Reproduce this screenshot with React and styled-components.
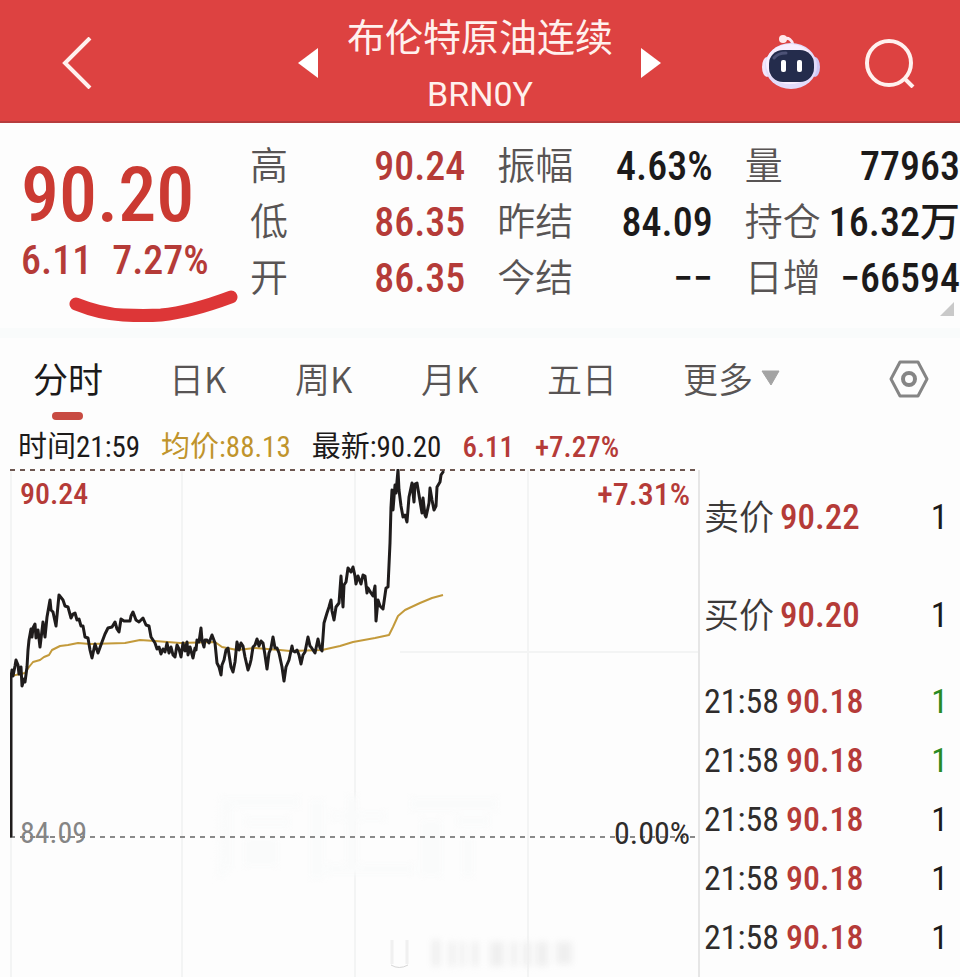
import React, { useState } from 'react';
import styled, { createGlobalStyle } from 'styled-components';

const GlobalStyle = createGlobalStyle`
  *, *::before, *::after {
    box-sizing: border-box;
  }

  body {
    margin: 0;
    background: #fdfdfd;
    color: #1c1a1a;
    font-family: 'Roboto Condensed', Roboto, 'Noto Sans CJK SC', sans-serif;
    overflow-x: hidden;
  }

  button {
    padding: 0;
    border: none;
    background: none;
    color: inherit;
    font: inherit;
    cursor: pointer;
  }
`;

const Page = styled.div`
  min-height: 100vh;
  overflow: hidden;
`;

const Header = styled.header`
  display: grid;
  grid-template-columns: 1fr auto 1fr;
  align-items: center;
  height: 123px;
  padding-top: 4px;
  background: #dd4241;
  border-bottom: 2px solid #b63c3d;
  color: #fff1ee;
`;

const HeaderSide = styled.div`
  display: flex;
  align-items: center;
  justify-content: ${({ $end }) => ($end ? 'flex-end' : 'flex-start')};
  gap: 44px;
  padding: 0 45px 0 62px;
`;

const IconButton = styled.button`
  display: flex;
  flex: none;

  svg {
    display: block;
  }
`;

const Switcher = styled.div`
  display: flex;
  align-items: center;
  gap: 28px;
`;

const Title = styled.h1`
  margin: 0;
  padding-top: 6px;
  font-size: 38px;
  font-weight: 400;
  line-height: 56px;
  text-align: center;
`;

const Code = styled.span`
  display: block;
  font-family: Roboto, sans-serif;
  font-size: 34px;
`;

const Quote = styled.section`
  position: relative;
  display: grid;
  grid-template-columns: 250px 1fr;
  height: 205px;
  padding-top: 16px;
`;

const Latest = styled.div`
  padding: 16px 0 0 21px;
  color: #cb3a32;
`;

const BigPrice = styled.div`
  font-size: 76px;
  font-weight: 500;
  line-height: 80px;
`;

const Change = styled.div`
  display: flex;
  gap: 20px;
  color: #b53b38;
  font-size: 40px;
  font-weight: 500;
  line-height: 52px;
`;

const Swoosh = styled.svg`
  display: block;
  margin: 3px 0 0 48px;
`;

const Stats = styled.dl`
  display: grid;
  grid-template-columns: repeat(3, 1fr);
  grid-auto-rows: 56px;
  column-gap: 32px;
  align-content: start;
  margin: 0;
`;

const Stat = styled.div`
  display: flex;
  align-items: center;
  justify-content: space-between;
  line-height: 48px;
  white-space: nowrap;

  dt {
    padding-bottom: 8px;
    color: #585454;
    font-family: 'Noto Sans CJK SC', sans-serif;
    font-size: 38px;
    font-weight: 350;
  }

  dd {
    margin: 0;
    color: ${({ $up }) => ($up ? '#b53b38' : '#1c1a1a')};
    font-size: 40px;
    font-weight: 500;
  }
`;

const Corner = styled.svg`
  position: absolute;
  right: 6px;
  bottom: 12px;
`;

const Tabs = styled.nav`
  display: flex;
  align-items: flex-start;
  height: 99px;
  padding: 18px 31px 0 33px;
  border-top: 10px solid #f9fbfb;
`;

const Tab = styled.button`
  display: flex;
  flex-direction: column;
  align-items: flex-start;
  width: ${({ $wide }) => ($wide ? '136px' : '126px')};
  color: ${({ $active }) => ($active ? '#1c1a1a' : '#585454')};
  font-family: 'Noto Sans CJK SC', sans-serif;
  font-size: 35px;
  font-weight: ${({ $active }) => ($active ? 400 : 350)};
  line-height: 44px;
  white-space: nowrap;

  &::after {
    content: '';
    width: 31px;
    height: 8px;
    margin: 12px 0 0 19px;
    border-radius: 4px;
    background: ${({ $active }) => ($active ? '#c84b42' : 'transparent')};
  }
`;

const TabLabel = styled.span`
  display: flex;
  align-items: center;
  gap: 8px;
`;

const Settings = styled(IconButton)`
  margin: 4px 0 0 auto;
`;

const Summary = styled.div`
  display: flex;
  gap: 21px;
  height: 42px;
  padding-left: 18px;
  font-size: 29px;
  line-height: 40px;
  white-space: nowrap;
`;

const Tone = styled.span`
  color: ${({ $tone }) => ({ avg: '#c0942c', up: '#b53b38' })[$tone] || 'inherit'};
  font-weight: ${({ $tone }) => ($tone === 'up' ? 500 : 400)};
`;

const Main = styled.main`
  display: grid;
  grid-template-columns: minmax(0, 690fr) minmax(0, 260fr);
  padding-left: 10px;
`;

const ChartBox = styled.div`
  position: relative;
`;

const ChartSvg = styled.svg`
  display: block;
  width: 100%;
  height: 508px;
`;

const Haze = styled.g`
  filter: blur(3px);
`;

const AxisLabel = styled.span`
  position: absolute;
  top: ${({ $base }) => ($base ? '346px' : '7px')};
  ${({ $right }) => ($right ? 'right: 10px;' : 'left: 10px;')}
  color: ${({ $color }) => $color};
  font-size: ${({ $right }) => ($right ? '32px' : '30px')};
  font-weight: ${({ $base }) => ($base ? 400 : 500)};
  line-height: 36px;
`;

const Side = styled.aside`
  padding: 0 12px 0 4px;
  white-space: nowrap;
`;

const Level = styled.div`
  display: flex;
  align-items: center;
  gap: 6px;
  height: 98px;
  font-size: 35px;
  line-height: 48px;
`;

const LevelLabel = styled.span`
  padding-bottom: 6px;
  color: #3c3939;
  font-family: 'Noto Sans CJK SC', sans-serif;
  font-weight: 350;
`;

const Price = styled.span`
  color: #b53b38;
  font-weight: 500;
`;

const Volume = styled.span`
  margin-left: auto;
  color: ${({ $green }) => ($green ? '#2b8a22' : '#1c1a1a')};
`;

const Trades = styled.ol`
  margin: 6px 0 0;
  padding: 0;
  list-style: none;
`;

const Trade = styled.li`
  display: flex;
  align-items: center;
  gap: 7px;
  height: 59px;
  color: #2f2c2c;
  font-size: 34px;
`;

const stats = [
  { label: '高', value: '90.24', up: true },
  { label: '振幅', value: '4.63%' },
  { label: '量', value: '77963' },
  { label: '低', value: '86.35', up: true },
  { label: '昨结', value: '84.09' },
  { label: '持仓', value: '16.32万' },
  { label: '开', value: '86.35', up: true },
  { label: '今结', value: '−−' },
  { label: '日增', value: '−66594' },
];

const tabs = ['分时', '日K', '周K', '月K', '五日', '更多'];

const levels = [
  { label: '卖价', price: '90.22', volume: 1 },
  { label: '买价', price: '90.20', volume: 1 },
];

const trades = [
  { id: 1, time: '21:58', price: '90.18', volume: 1, green: true },
  { id: 2, time: '21:58', price: '90.18', volume: 1, green: true },
  { id: 3, time: '21:58', price: '90.18', volume: 1 },
  { id: 4, time: '21:58', price: '90.18', volume: 1 },
  { id: 5, time: '21:58', price: '90.18', volume: 1 },
];

const priceLine =
  '11,836 11,677 12,670 13,676 15,666 16,660 18,665 19,674 21,667 22,686 24,679 25,682 27,667 28,650 29,640 31,629 32,637 33,628 35,624 36,638 38,630 40,647 43,622 45,637 47,617 50,600 51,610 53,612 56,626 59,595 63,600 65,606 68,607 71,618 73,614 75,613 77,620 79,619 81,626 83,626 85,637 88,638 90,650 92,658 95,644 98,653 102,642 105,634 108,628 112,627 115,622 117,629 119,632 121,619 124,621 130,621 131,616 133,612 136,620 139,622 143,618 146,625 149,626 151,637 155,643 157,649 159,647 161,654 163,649 165,652 167,643 169,653 171,647 173,655 175,657 177,645 179,649 181,657 183,643 185,651 187,642 188,655 190,647 193,658 195,648 196,650 197,640 199,642 201,628 202,640 204,647 205,640 207,640 209,643 212,635 215,643 217,663 219,667 221,675 222,665 224,660 226,650 228,648 231,667 233,672 235,662 237,642 239,650 241,643 243,646 245,657 248,670 250,664 251,660 253,647 255,645 257,639 259,646 261,641 263,643 265,655 267,669 269,653 271,648 273,637 275,648 277,648 279,653 282,667 284,681 286,667 289,660 292,646 293,651 295,652 297,650 299,655 301,664 303,655 305,652 308,637 310,646 311,647 313,650 315,653 318,639 320,648 322,651 324,623 327,613 329,607 331,600 332,611 334,620 336,607 339,603 341,576 343,607 344,585 346,582 348,568 351,572 353,567 355,576 356,584 358,576 361,584 363,575 365,576 367,593 368,588 371,593 373,596 375,586 376,621 378,600 380,606 383,609 386,588 388,587 390,543 391,507 392,490 393,510 395,485 396,493 398,470 399,490 401,506 403,517 405,515 407,522 409,497 412,483 414,502 415,484 417,483 419,495 422,513 423,498 425,515 426,517 429,503 430,488 432,500 434,510 436,506 437,487 440,482 441,475 443,472';

const averageLine =
  '11,676 25,673 29,667 33,662 40,660 44,657 49,655 52,650 60,646 68,645 78,643 90,644 125,643 140,640 155,641 180,643 215,642 222,647 237,650 255,648 280,650 290,651 322,650 340,646 353,642 375,638 389,635 393,627 398,616 405,610 420,603 432,598 443,595';

const RobotIcon = () => (
  <svg width="60" height="58" viewBox="0 0 60 58">
    <path d="M22 5c6-2 9 1 10 6" fill="none" stroke="#fbe9f4" strokeWidth="3" />
    <circle cx="22" cy="5" r="4" fill="#ffe9ec" />
    <ellipse cx="6" cy="33" rx="5" ry="10" fill="#f2e6fa" />
    <ellipse cx="54" cy="33" rx="5" ry="10" fill="#cfc8f5" />
    <ellipse cx="30" cy="32" rx="26" ry="23" fill="#e2dcfa" />
    <ellipse cx="29" cy="30" rx="24" ry="20" fill="#f8efff" />
    <rect x="8" y="16" width="45" height="32" rx="14" fill="#242c4c" />
    <path d="M13 24c3-4 7-5 12-5" fill="none" stroke="#4c5276" strokeWidth="3" strokeLinecap="round" />
    <rect x="20" y="26" width="5" height="12" rx="2" fill="#fff" />
    <rect x="36" y="26" width="5" height="12" rx="2" fill="#fff" />
  </svg>
);

const Chart = () => (
  <ChartSvg viewBox="10 469 690 508" preserveAspectRatio="none" role="img" aria-label="分时走势">
    <g fill="none" stroke="#f3f4f4" strokeWidth="2">
      <path d="M11 470V977M182 470V977M355 470V977M528 470V977" />
      <path d="M400 652H700" />
      <path d="M699 470V977" stroke="#e6e6e6" />
    </g>
    <Haze fill="#fafbfb">
      <path d="M220 797h80v10h-68v60l-14 12zM244 818h46v8h-46zM244 838h34v28h-34zM310 800h14v78h-14zM330 812h56v8h-56zM346 796h12v76h-12zM326 864h88v10h-88zM410 798h88v12h-88zM420 820h22v56h-22zM456 816h34v10h-34zM462 836h12v40h-12z" />
    </Haze>
    <path d="M392 940v24M407 940v24" stroke="#f0f0f0" strokeWidth="3" />
    <path d="M391 965q8 5 17 0" fill="none" stroke="#d6d6d6" />
    <Haze fill="#efefef">
      <path d="M432 940h8v26h-8zM449 942h6v24h-6zM460 942h5v24h-5zM472 942h6v24h-6zM490 942h14v24h-14zM511 942h6v24h-6zM523 942h8v24h-8zM536 942h12v24h-12zM556 942h16v22h-16z" />
    </Haze>
    <path d="M10 470H700" stroke="#6d5751" strokeWidth="2" strokeDasharray="5 5" />
    <path d="M10 837H700" stroke="#8a8a8a" strokeWidth="2" strokeDasharray="5 5" />
    <polyline points={averageLine} fill="none" stroke="#c39a3b" strokeWidth="2" strokeLinejoin="round" />
    <polyline points={priceLine} fill="none" stroke="#1f1c1c" strokeWidth="3" strokeLinejoin="round" strokeLinecap="round" />
  </ChartSvg>
);

const App = () => {
  const [activeTab, setActiveTab] = useState('分时');

  return (
    <Page>
      <GlobalStyle />
      <Header>
        <HeaderSide>
          <IconButton type="button" aria-label="返回">
            <svg width="30" height="52" viewBox="0 0 30 52">
              <path d="M28 1L3 26l25 25" fill="none" stroke="currentColor" strokeWidth="4" />
            </svg>
          </IconButton>
        </HeaderSide>
        <Switcher>
          <IconButton type="button" aria-label="上一个">
            <svg width="21" height="30" viewBox="0 0 21 30">
              <path d="M20 0v30L0 15z" fill="#fff" />
            </svg>
          </IconButton>
          <Title>
            布伦特原油连续
            <Code>BRN0Y</Code>
          </Title>
          <IconButton type="button" aria-label="下一个">
            <svg width="21" height="30" viewBox="0 0 21 30">
              <path d="M0 0v30l20-15z" fill="#fff" />
            </svg>
          </IconButton>
        </Switcher>
        <HeaderSide $end>
          <IconButton type="button" aria-label="智能助手">
            <RobotIcon />
          </IconButton>
          <IconButton type="button" aria-label="搜索">
            <svg width="50" height="50" viewBox="0 0 50 50">
              <circle cx="24" cy="25" r="22" fill="none" stroke="currentColor" strokeWidth="4" />
              <path d="M39 40l9 9" stroke="currentColor" strokeWidth="4" />
            </svg>
          </IconButton>
        </HeaderSide>
      </Header>

      <Quote>
        <Latest>
          <BigPrice>90.20</BigPrice>
          <Change>
            <span>6.11</span>
            <span>7.27%</span>
          </Change>
          <Swoosh width="170" height="34" viewBox="0 0 170 34">
            <path d="M7 14Q32 24 54 25T92 25Q122 22 162 7" fill="none" stroke="#dd3637" strokeWidth="13" strokeLinecap="round" />
          </Swoosh>
        </Latest>
        <Stats>
          {stats.map(({ label, value, up }) => (
            <Stat key={label} $up={up}>
              <dt>{label}</dt>
              <dd>{value}</dd>
            </Stat>
          ))}
        </Stats>
        <Corner width="14" height="14" viewBox="0 0 14 14">
          <path d="M14 0v14H0z" fill="#c9c9c9" />
        </Corner>
      </Quote>

      <Tabs>
        {tabs.map((tab, index) => (
          <Tab
            key={tab}
            type="button"
            $active={tab === activeTab}
            $wide={index === 0 || index === 4}
            onClick={() => setActiveTab(tab)}
          >
            <TabLabel>
              {tab}
              {tab === '更多' && (
                <svg width="19" height="16" viewBox="0 0 19 16">
                  <path d="M1 1h17L10 15z" fill="#a3a3a3" stroke="#a3a3a3" strokeLinejoin="round" />
                </svg>
              )}
            </TabLabel>
          </Tab>
        ))}
        <Settings type="button" aria-label="设置">
          <svg width="40" height="38" viewBox="0 0 40 38" fill="none" stroke="#858585" strokeLinejoin="round">
            <path d="M11 2h18l9 17-9 17H11L2 19z" strokeWidth="3" />
            <circle cx="20" cy="19" r="6" strokeWidth="4" />
          </svg>
        </Settings>
      </Tabs>

      <Summary>
        <Tone>时间21:59</Tone>
        <Tone $tone="avg">均价:88.13</Tone>
        <Tone>最新:90.20</Tone>
        <Tone $tone="up">6.11</Tone>
        <Tone $tone="up">+7.27%</Tone>
      </Summary>

      <Main>
        <ChartBox>
          <Chart />
          <AxisLabel $color="#b53b38">90.24</AxisLabel>
          <AxisLabel $color="#b53b38" $right>+7.31%</AxisLabel>
          <AxisLabel $color="#858585" $base>84.09</AxisLabel>
          <AxisLabel $color="#2f2c2c" $base $right>0.00%</AxisLabel>
        </ChartBox>
        <Side>
          {levels.map(({ label, price, volume }) => (
            <Level key={label}>
              <LevelLabel>{label}</LevelLabel>
              <Price>{price}</Price>
              <Volume>{volume}</Volume>
            </Level>
          ))}
          <Trades>
            {trades.map(({ id, time, price, volume, green }) => (
              <Trade key={id}>
                <span>{time}</span>
                <Price>{price}</Price>
                <Volume $green={green}>{volume}</Volume>
              </Trade>
            ))}
          </Trades>
        </Side>
      </Main>
    </Page>
  );
};

export default App;
